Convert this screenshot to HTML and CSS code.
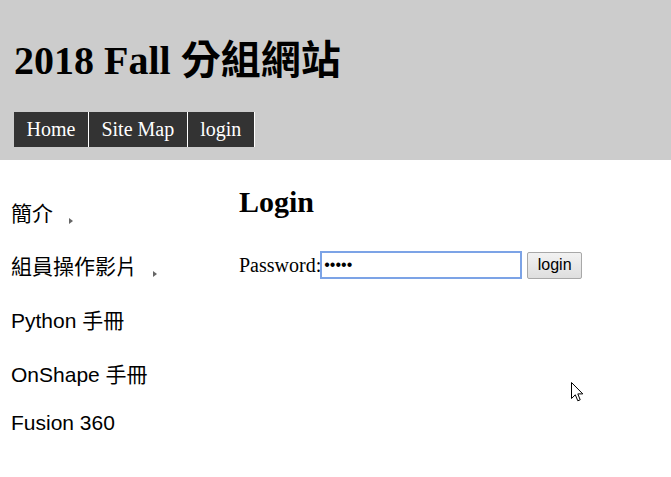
FILE: index.html
```html
<!DOCTYPE html>
<html lang="zh-Hant">
<head>
<meta charset="utf-8">
<title>2018 Fall 分組網站</title>
<link rel="stylesheet" href="styles.css">
</head>
<body>
<header class="header">
  <h1 class="title">2018 Fall 分組網站</h1>
  <nav class="nav">
    <a class="nav-item" href="#">Home</a>
    <a class="nav-item" href="#">Site Map</a>
    <a class="nav-item" href="#">login</a>
  </nav>
</header>
<div class="layout">
  <ul class="sidebar">
    <li class="side-item"><a href="#">簡介</a><span class="arrow"></span></li>
    <li class="side-item"><a href="#">組員操作影片</a><span class="arrow"></span></li>
    <li class="side-item"><a href="#">Python 手冊</a></li>
    <li class="side-item"><a href="#">OnShape 手冊</a></li>
    <li class="side-item"><a href="#">Fusion 360</a></li>
  </ul>
  <main class="content">
    <h2 class="heading">Login</h2>
    <form class="login-form">
      <label class="pw-label" for="pw">Password:</label><input class="pw-input" id="pw" type="password" value="abcde"><button class="pw-button" type="button">login</button>
    </form>
  </main>
</div>
<svg class="cursor" width="13" height="21" viewBox="0 0 13 21"><path d="M0.5 0.5 L0.5 16.5 L4.3 12.8 L6.8 18.8 L9.2 17.8 L6.8 11.9 L11.8 11.9 Z" fill="#fff" stroke="#000" stroke-width="1" stroke-linejoin="miter"/></svg>
</body>
</html>
```
FILE: styles.css
```css
html, body {
  margin: 0;
  padding: 0;
  background: #fff;
}
body {
  font-family: "Liberation Serif", "Noto Sans CJK TC", serif;
  color: #000;
  width: 671px;
  height: 477px;
  overflow: hidden;
}
.header {
  background: #ccc;
  padding: 38px 14px 13px;
}
.title {
  margin: 0;
  font: bold 40px/46px "Liberation Serif", "Noto Sans CJK TC", serif;
}
.nav {
  display: flex;
  margin-top: 28px;
}
.nav-item {
  display: block;
  height: 34px;
  padding: 0 12.5px 1px;
  line-height: 34px;
  font-size: 20px;
  color: #fff;
  background: #333;
  border-right: 1px solid #fff;
  text-decoration: none;
}
.layout {
  display: flex;
}
.sidebar {
  list-style: none;
  margin: 0;
  padding: 25px 0 0 11px;
  width: 228px;
  font-family: "Liberation Sans", "Noto Sans CJK TC", sans-serif;
  font-size: 21px;
}
.side-item {
  padding: 11.8px 0;
}
.side-item a {
  color: #000;
  text-decoration: none;
}
.arrow {
  display: inline-block;
  width: 0;
  height: 0;
  margin-left: 16px;
  border-left: 4px solid #666;
  border-top: 3.5px solid transparent;
  border-bottom: 3.5px solid transparent;
  vertical-align: -3px;
}
.content {
  padding-top: 25px;
}
.heading {
  margin: 0 0 32px;
  font: bold 30px "Liberation Serif", serif;
}
.login-form {
  display: flex;
  align-items: center;
}
.pw-label {
  font-size: 20px;
  margin-right: -1px;
}
.pw-input {
  box-sizing: border-box;
  width: 202px;
  height: 28px;
  margin: 0;
  padding: 1px 2px;
  border: 2px solid #7ca3e6;
  font: 16px "Liberation Sans", sans-serif;
  outline: none;
}
.pw-button {
  box-sizing: border-box;
  height: 27px;
  margin: 0 0 0 5px;
  padding: 0 9.5px;
  font: 16px "Liberation Sans", sans-serif;
  color: #000;
  background: linear-gradient(#f2f2f2, #dedede);
  border: 1px solid #a8a8a8;
  border-radius: 2px;
}
.cursor {
  position: absolute;
  left: 571px;
  top: 382px;
}
```
